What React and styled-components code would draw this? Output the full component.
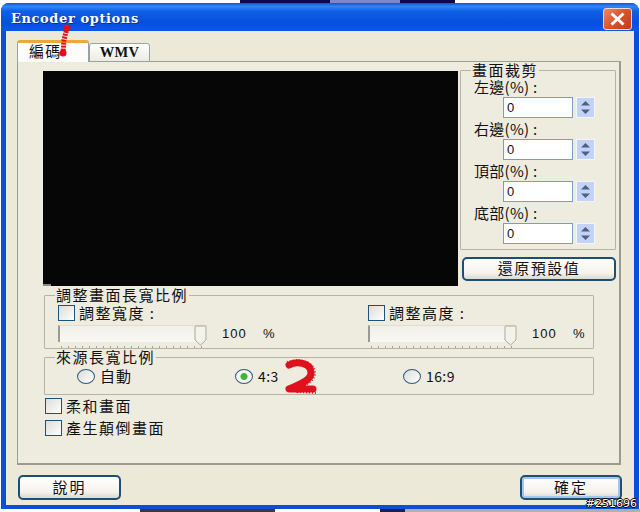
import React from 'react';
import styled, { createGlobalStyle } from 'styled-components';

const Global = createGlobalStyle`
  html, body { margin: 0; padding: 0; background: #fff; }
  body { font-family: "Noto Sans CJK TC", "Liberation Sans", sans-serif; color: #111; }
`;

const Page = styled.div`
  width: 640px;
  height: 512px;
  overflow: hidden;
  box-sizing: border-box;
  padding: 3px 3px 3px 1px;
  display: flex;
  position: relative;
  background:
    linear-gradient(90deg, #fff 0 240px, #0a0a50 240px 330px, #7c88c8 330px 400px, #0a0a50 400px 455px, #fff 455px) top / 100% 3px no-repeat,
    linear-gradient(90deg, #fff 0 140px, #3a3a3a 140px 275px, #fff 275px 380px, #1a2050 380px 405px, #b0b0b0 405px) bottom / 100% 3px no-repeat,
    #fff;
`;

const Window = styled.div`
  flex: 1;
  display: flex;
  flex-direction: column;
  border-radius: 8px 8px 0 0;
  background: #0a4fd8;
  padding: 0 5px 4px 5px;
`;

const TitleBar = styled.div`
  height: 28px;
  flex: none;
  margin: 0 -5px;
  padding: 0 7px 0 10px;
  border-radius: 8px 8px 0 0;
  display: flex;
  align-items: center;
  justify-content: space-between;
  background: linear-gradient(180deg, #0a55d8 0%, #2f86f4 12%, #0f5fe6 30%, #0550dc 70%, #0a5ae8 100%);
`;

const Title = styled.span`
  font-family: "DejaVu Serif", "Liberation Serif", serif;
  font-weight: bold;
  font-size: 13px;
  letter-spacing: 0.6px;
  color: #fff;
  text-shadow: 1px 1px 0 #0a2f90;
  margin-bottom: -2px;
`;

const CloseButton = styled.div`
  width: 29px;
  height: 22px;
  margin-top: 4px;
  border: 1px solid #f2d8cc;
  border-radius: 3px;
  box-sizing: border-box;
  background: linear-gradient(135deg, #e98a66 0%, #d9532c 50%, #c23c18 100%);
  display: flex;
  align-items: center;
  justify-content: center;
`;

const Client = styled.div`
  flex: 1;
  background: #ece9d8;
  padding: 10px 12px 0 11px;
  display: flex;
  flex-direction: column;
`;

const TabStrip = styled.div`
  display: flex;
  align-items: flex-end;
  height: 21px;
  position: relative;
  z-index: 1;
  margin-bottom: -1px;
`;

const Tab = styled.div`
  box-sizing: border-box;
  width: ${p => (p.$active ? '72px' : '61px')};
  height: ${p => (p.$active ? '22px' : '19px')};
  display: flex;
  align-items: center;
  justify-content: ${p => (p.$active ? 'flex-start' : 'center')};
  padding: ${p => (p.$active ? '0 0 5px 11px' : '0')};
  font-family: ${p => (p.$serif ? '"Liberation Serif", serif' : 'inherit')};
  font-size: ${p => (p.$serif ? '14.5px' : '15px')};
  font-weight: ${p => (p.$serif ? 'bold' : 'normal')};
  letter-spacing: ${p => (p.$serif ? '0.3px' : '1.3px')};
  border: 1px solid #98a2a0;
  border-bottom: ${p => (p.$active ? 'none' : '1px solid #98a2a0')};
  border-top: ${p => (p.$active ? '3px solid #eba83c' : '1px solid #98a2a0')};
  border-radius: 3px 3px 0 0;
  background: ${p => (p.$active ? '#fcfcfa' : 'linear-gradient(180deg, #fff, #ecebe2)')};
`;

const TabPanel = styled.div`
  box-sizing: border-box;
  width: 604px;
  height: 404px;
  border: 1px solid #98a09a;
  border-right: 2px solid #9a9a90;
  border-bottom: 2px solid #9a9a90;
  padding: 9px 0 0 25px;
  background: #eeebdf;
  display: flex;
  flex-direction: column;
`;

const TopRow = styled.div`
  display: flex;
  gap: 2px;
  height: 215px;
`;

const Video = styled.div`
  width: 415px;
  height: 215px;
  background: #060606;
  flex: none;
  position: relative;

  &::after {
    content: '';
    position: absolute;
    left: 0;
    bottom: 0;
    width: 8px;
    height: 2px;
    background: #8a8a84;
  }
`;

const SideColumn = styled.div`
  width: 156px;
  flex: none;
  display: flex;
  flex-direction: column;
  gap: 7px;
`;

const Group = styled.fieldset`
  margin: 0;
  padding: 0;
  min-width: 0;
  box-sizing: border-box;
  border: 1px solid #b4b3a4;
  border-radius: 1px;
`;

const Legend = styled.legend`
  margin-left: ${p => p.$inset || 10}px;
  padding: 0 1px;
  font-size: 15px;
  line-height: 14px;
  letter-spacing: 1.5px;
`;

const CropGroup = styled(Group)`
  height: 187px;
  margin-top: -8px;
  display: flex;
  flex-direction: column;
`;

const CropField = styled.div`
  display: flex;
  flex-direction: column;
  height: 42px;
`;

const CropLabel = styled.div`
  padding-left: 13px;
  font-size: 15px;
  line-height: 18px;
  height: 19px;
  letter-spacing: 0.3px;
  margin-top: 1px;
`;

const Spin = styled.div`
  display: flex;
  align-items: center;
  gap: 3px;
  padding-left: 42px;
`;

const SpinInput = styled.div`
  box-sizing: border-box;
  width: 70px;
  height: 21px;
  border: 1px solid #7f9db9;
  background: #fff;
  padding-left: 3px;
  font-family: "Liberation Sans", sans-serif;
  font-size: 13px;
  line-height: 19px;
`;

const SpinArrows = styled.div`
  box-sizing: border-box;
  width: 19px;
  height: 21px;
  background: #c3d3f6;
  border: 1px solid #f2f5fc;
  display: flex;
  align-items: center;
  justify-content: center;
`;

const XpButton = styled.div`
  box-sizing: border-box;
  width: ${p => p.$w}px;
  height: ${p => p.$h}px;
  padding-bottom: 3px;
  border: 2px solid #1c4f78;
  border-radius: 5px;
  background: linear-gradient(180deg, #fff 0%, #f4f3ee 70%, #dcd8cc 100%);
  box-shadow: ${p => (p.$focus ? 'inset 0 0 0 2px #a9c4ec' : 'none')};
  display: flex;
  align-items: center;
  justify-content: center;
  font-size: 15px;
  letter-spacing: ${p => p.$spacing || 1.5}px;
`;

const ResetButton = styled(XpButton)`
  margin-left: 2px;
`;

const ResizeGroup = styled(Group)`
  width: 550px;
  height: 61px;
  margin: 2px 0 0 1px;
  display: grid;
  grid-template-columns: 310px 1fr;
`;

const ResizeCol = styled.div`
  padding: 1px 0 0 13px;
  display: flex;
  flex-direction: column;
`;

const CheckRow = styled.label`
  display: flex;
  align-items: center;
  gap: 4px;
  font-size: 15px;
  letter-spacing: 1.5px;
  line-height: 16px;
  height: ${p => p.$h || 18}px;
`;

const CheckBox = styled.span`
  box-sizing: border-box;
  width: 17px;
  height: 16px;
  flex: none;
  border: 1px solid #1c5180;
  background: linear-gradient(135deg, #dcdcd7, #ffffff);
`;

const SliderRow = styled.div`
  display: flex;
  align-items: center;
  height: 22px;
  margin-top: -1px;
  font-family: "Liberation Sans", sans-serif;
  font-size: 13px;
  letter-spacing: 1px;
`;

const SliderTrack = styled.div`
  box-sizing: border-box;
  width: 149px;
  height: 17px;
  flex: none;
  border-left: 2px solid #9a9a90;
  border-top: 1px solid #e0ded0;
  background: linear-gradient(180deg, #f0efe8, #f9f8f4);
  position: relative;
`;

const Thumb = styled.svg`
  width: 13px;
  height: 21px;
  position: absolute;
  right: 0;
  top: -1px;
`;

const Ticks = styled.div`
  width: 144px;
  height: 2px;
  margin: 2px 0 0 3px;
  background: repeating-linear-gradient(90deg, #a5a396 0 1px, transparent 1px 7px);
`;

const Value = styled.span`
  margin-left: 15px;
  width: 41px;
`;

const RatioGroup = styled(Group)`
  width: 550px;
  height: 45px;
  margin: 1px 0 0 1px;
`;

const RatioRow = styled.div`
  display: flex;
  align-items: flex-start;
  padding: 3px 0 0 32px;
`;

const RatioOption = styled.label`
  display: flex;
  align-items: center;
  gap: 5px;
  width: ${p => p.$w}px;
  font-size: ${p => (p.$num ? '14px' : '15px')};
  line-height: 18px;
  letter-spacing: ${p => (p.$num ? '0.4px' : '1px')};
`;

const Radio = styled.span`
  box-sizing: border-box;
  width: 18px;
  height: 15px;
  flex: none;
  border-radius: 50%;
  border: 1px solid #2c5a80;
  background: ${p => (p.$on
    ? 'radial-gradient(circle, #3eb43e 0 3px, #f4f4ee 4px)'
    : 'linear-gradient(135deg, #dcdcd7, #fff)')};
`;

const Options = styled.div`
  margin: 1px 0 0 2px;
  display: flex;
  flex-direction: column;
  gap: 3px;
`;

const Footer = styled.div`
  display: flex;
  justify-content: space-between;
  padding: 10px 0 0 1px;
  width: 604px;
`;

const Stamp = styled.span`
  position: absolute;
  z-index: 2;
  right: 3px;
  bottom: 2px;
  font-family: "DejaVu Sans", sans-serif;
  font-size: 11px;
  line-height: 12px;
  color: #fff;
  text-shadow: 1px 0 0 #000, -1px 0 0 #000, 0 1px 0 #000, 0 -1px 0 #000;
`;

const Scribble = styled.svg`
  position: absolute;
  z-index: 2;
  left: 0;
  top: 0;
  width: 640px;
  height: 512px;
  pointer-events: none;
`;

const cropFields = ['左邊(%) :', '右邊(%) :', '頂部(%) :', '底部(%) :'];

function Slider({ label }) {
  return (
    <ResizeCol>
      <CheckRow $h={20}><CheckBox />{label}</CheckRow>
      <SliderRow>
        <SliderTrack>
          <Thumb viewBox="0 0 13 21">
            <path d="M1 2 Q1 1 2 1 H11 Q12 1 12 2 V15 L6.5 20 L1 15 Z" fill="#f4f3ea" stroke="#a8a89a" />
          </Thumb>
        </SliderTrack>
        <Value>100</Value>
        <span>%</span>
      </SliderRow>
      <Ticks />
    </ResizeCol>
  );
}

export default function App() {
  return (
    <Page>
      <Global />
      <Window>
        <TitleBar>
          <Title>Encoder options</Title>
          <CloseButton>
            <svg width="17" height="14" viewBox="0 0 17 14">
              <path d="M2.5 1.5 L14.5 12.5 M14.5 1.5 L2.5 12.5" stroke="#fff" strokeWidth="3" />
            </svg>
          </CloseButton>
        </TitleBar>
        <Client>
          <TabStrip>
            <Tab $active>編碼</Tab>
            <Tab $serif>WMV</Tab>
          </TabStrip>
          <TabPanel>
            <TopRow>
              <Video />
              <SideColumn>
                <CropGroup>
                  <Legend>畫面裁剪</Legend>
                  {cropFields.map(f => (
                    <CropField key={f}>
                      <CropLabel>{f}</CropLabel>
                      <Spin>
                        <SpinInput>0</SpinInput>
                        <SpinArrows>
                          <svg width="11" height="15" viewBox="0 0 11 15">
                            <path d="M5.5 1 L10 5.5 H1 Z M5.5 14 L10 9.5 H1 Z" fill="#4d6185" />
                          </svg>
                        </SpinArrows>
                      </Spin>
                    </CropField>
                  ))}
                </CropGroup>
                <ResetButton $w={154} $h={24}>還原預設值</ResetButton>
              </SideColumn>
            </TopRow>
            <ResizeGroup>
              <Legend>調整畫面長寬比例</Legend>
              <Slider label="調整寬度 :" />
              <Slider label="調整高度 :" />
            </ResizeGroup>
            <RatioGroup>
              <Legend>來源長寬比例</Legend>
              <RatioRow>
                <RatioOption $w={158}><Radio />自動</RatioOption>
                <RatioOption $w={168} $num><Radio $on />4:3</RatioOption>
                <RatioOption $w={100} $num><Radio />16:9</RatioOption>
              </RatioRow>
            </RatioGroup>
            <Options>
              <CheckRow $h={19}><CheckBox />柔和畫面</CheckRow>
              <CheckRow $h={19}><CheckBox />產生顛倒畫面</CheckRow>
            </Options>
          </TabPanel>
          <Footer>
            <XpButton $w={103} $h={25} $spacing={2}>說明</XpButton>
            <XpButton $w={102} $h={25} $focus $spacing={2}>確定</XpButton>
          </Footer>
        </Client>
      </Window>
      <Scribble viewBox="0 0 640 512">
        <path d="M67 28 L64 40 L63 53" stroke="#e0101c" strokeWidth="5" strokeDasharray="2 1" fill="none" />
        <circle cx="67" cy="28" r="3.5" fill="#e0101c" />
        <circle cx="63" cy="53" r="3.5" fill="#e0101c" />
        <path d="M289 365 C296 361 311 362 311 373 C311 381 298 385 289 389 L313 389" stroke="#e0101c" strokeWidth="7" fill="none" strokeLinecap="round" strokeLinejoin="round" />
        <path d="M287 362 C298 358 315 361 315 373 C315 382 303 385 298 392 L316 393" stroke="#e0101c" strokeWidth="2" strokeDasharray="1 2" fill="none" />
      </Scribble>
      <Stamp>#251696</Stamp>
    </Page>
  );
}
